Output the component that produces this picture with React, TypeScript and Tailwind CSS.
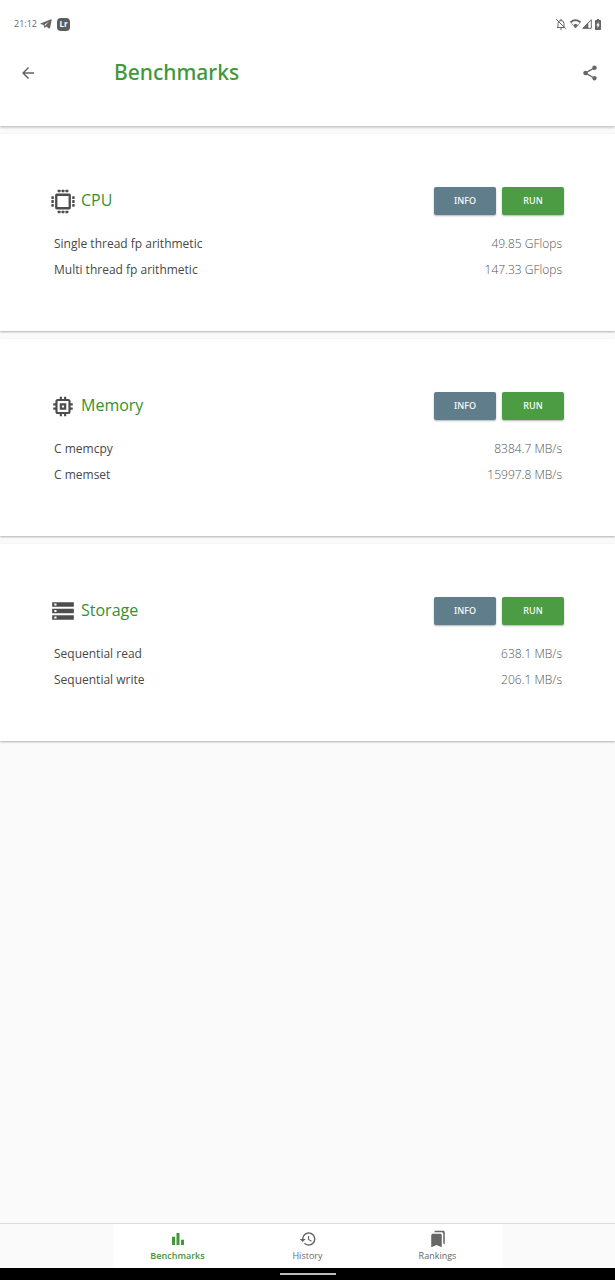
import type { ReactNode } from 'react';
import { MdArrowBack, MdBarChart, MdBookmarks, MdHistory, MdMemory, MdShare, MdStorage } from 'react-icons/md';

type Result = { label: string; value: string };

type Benchmark = { title: string; icon: ReactNode; results: Result[] };

function CpuIcon() {
  return (
    <svg width="27" height="27" viewBox="0 0 27 27" fill="#4d4d4d" aria-hidden="true">
      <rect x="6.5" y="6.5" width="14" height="14" rx="0.5" fill="none" stroke="#4d4d4d" strokeWidth="2.4" />
      {[8, 12, 16].map((p) => (
        <g key={p}>
          <rect x={p} y="1.4" width="3" height="2.6" rx="0.5" />
          <rect x={p} y="23" width="3" height="2.6" rx="0.5" />
          <rect x="1.4" y={p} width="2.6" height="3" rx="0.5" />
          <rect x="23" y={p} width="2.6" height="3" rx="0.5" />
        </g>
      ))}
    </svg>
  );
}

const benchmarks: Benchmark[] = [
  {
    title: 'CPU',
    icon: <CpuIcon />,
    results: [
      { label: 'Single thread fp arithmetic', value: '49.85 GFlops' },
      { label: 'Multi thread fp arithmetic', value: '147.33 GFlops' },
    ],
  },
  {
    title: 'Memory',
    icon: <MdMemory size={29} aria-hidden="true" />,
    results: [
      { label: 'C memcpy', value: '8384.7 MB/s' },
      { label: 'C memset', value: '15997.8 MB/s' },
    ],
  },
  {
    title: 'Storage',
    icon: <MdStorage size={26} aria-hidden="true" />,
    results: [
      { label: 'Sequential read', value: '638.1 MB/s' },
      { label: 'Sequential write', value: '206.1 MB/s' },
    ],
  },
];

const tabs = [
  { label: 'Benchmarks', icon: MdBarChart, active: true },
  { label: 'History', icon: MdHistory, active: false },
  { label: 'Rankings', icon: MdBookmarks, active: false },
];

function StatusBar() {
  return (
    <div className="flex items-center justify-between pt-4 pr-3.5 pl-3.5 text-[#666]">
      <div className="flex items-center">
        <span className="w-[26px] text-[9px] leading-4">21:12</span>
        <svg width="12" height="10" viewBox="0 0 12 10" fill="currentColor" aria-hidden="true">
          <path d="M.5 4.500 11 .3c.5-.2.8.1.7.6L10 9c-.1.6-.5.7-1 .4L6.300 7.400 5 8.700c-.3.3-.6.2-.7-.2L3.600 6 .5 5.100c-.4-.1-.4-.4 0-.6z" />
          <path d="M4.300 6 9 2.500 5.200 6.700z" fill="#fff" />
        </svg>
        <span className="ml-[5px] flex h-[13px] w-[13px] items-center justify-center rounded-sm bg-[#5c5c5c] text-[8px] leading-none font-bold text-white">
          Lr
        </span>
      </div>
      <div className="flex items-center gap-[3px]">
        <svg width="12" height="12" viewBox="0 0 12 12" fill="none" stroke="currentColor" aria-hidden="true">
          <path d="M2 9.500h8M3 9.500V5.500a3 3 0 0 1 6 0v4M6 1v1.500M1.200 1.200l9.600 9.600M5 11h2" />
        </svg>
        <div className="flex items-center gap-px">
          <svg width="11" height="10" viewBox="0 0 11 10" aria-hidden="true">
            <path d="M.5 3.300Q5.500-1 10.500 3.300" fill="none" stroke="currentColor" strokeWidth="1.800" />
            <path d="M.8 3.500 5.500 9 10.200 3.500" fill="none" stroke="currentColor" strokeWidth=".6" />
            <path d="M3.300 6Q5.500 4 8 6L5.500 9.300z" fill="currentColor" />
          </svg>
          <svg width="10" height="10" viewBox="0 0 10 10" aria-hidden="true">
            <path d="M.8 9.300 9.300.8v8.500z" fill="none" stroke="currentColor" />
            <path d="M.8 9.500 6.300 4v5.500z" fill="currentColor" />
          </svg>
        </div>
        <svg width="6" height="11" viewBox="0 0 6 11" fill="currentColor" aria-hidden="true">
          <path fillRule="evenodd" d="M2 0h2v1h1.300q.7 0 .7.7v8.600q0 .7-.7.7H.7Q0 11 0 10.300V1.700Q0 1 .7 1H2zm1.500 3L1.200 6.500h1.300V9l2.300-3.600H3.500z" />
        </svg>
      </div>
    </div>
  );
}

function BenchmarkCard({ title, icon, results }: Benchmark) {
  return (
    <section className="bg-white pt-[53px] pr-[51px] pb-12 pl-[50px] shadow-[0_1px_2px_rgba(0,0,0,0.3)]">
      <div className="flex items-center justify-between">
        <div className="flex items-center text-[#4d4d4d]">
          <span className="flex h-7 w-[26px] items-center justify-center">{icon}</span>
          <h2 className="ml-[5px] pb-0.5 text-base leading-6 font-medium text-[#378f2f]">{title}</h2>
        </div>
        <div className="flex gap-1.5">
          <button
            type="button"
            aria-label={`${title} INFO`}
            className="h-7 w-[62px] rounded-xs bg-[#607d8b] font-['Noto_Sans','Open_Sans',sans-serif] text-[9px] font-medium text-white shadow-[0_1px_2px_rgba(0,0,0,0.3)]"
          >
            INFO
          </button>
          <button
            type="button"
            aria-label={`${title} RUN`}
            className="h-7 w-[62px] rounded-xs bg-[#4c9c44] font-['Noto_Sans','Open_Sans',sans-serif] text-[9px] font-medium text-white shadow-[0_1px_2px_rgba(0,0,0,0.3)]"
          >
            RUN
          </button>
        </div>
      </div>
      <dl className="mt-4 pr-0.5 pl-1 text-xs">
        {results.map((result) => (
          <div key={result.label} className="flex h-[26px] items-center justify-between">
            <dt className="text-[#484848]">{result.label}</dt>
            <dd className="font-light text-[#555]">{result.value}</dd>
          </div>
        ))}
      </dl>
    </section>
  );
}

export default function App() {
  return (
    <div className="flex min-h-screen flex-col bg-[#fafafa] font-['Open_Sans','Noto_Sans',sans-serif]">
      <header className="bg-white pb-[37px] shadow-[0_1px_3px_rgba(0,0,0,0.3)]">
        <StatusBar />
        <div className="mt-[25px] flex h-8 items-center pr-4 pl-[19px] text-[#666]">
          <button type="button" aria-label="Back">
            <MdArrowBack size={18} />
          </button>
          <h1 className="ml-[77px] flex-1 pb-0.5 font-['Noto_Sans','Open_Sans',sans-serif] text-[21px] leading-8 font-medium text-[#419739]">
            Benchmarks
          </h1>
          <button type="button" aria-label="Share">
            <MdShare size={18} />
          </button>
        </div>
      </header>

      <main className="mt-2 flex flex-1 flex-col gap-2">
        {benchmarks.map((benchmark) => (
          <BenchmarkCard key={benchmark.title} {...benchmark} />
        ))}
      </main>

      <footer>
        <nav className="flex justify-center border-t border-[#dcdcdc]">
          {tabs.map(({ label, icon: Icon, active }) => (
            <a
              key={label}
              href={`#${label.toLowerCase()}`}
              aria-current={active ? 'page' : undefined}
              className={`flex h-11 w-[130px] flex-col items-center bg-white pt-1.5 text-[9px] leading-3 ${
                active ? 'font-semibold text-[#419739]' : 'text-[#666]'
              }`}
            >
              <Icon size={18} className="mb-0.5" aria-hidden="true" />
              {label}
            </a>
          ))}
        </nav>
        <div className="flex h-3 items-center justify-center bg-black">
          <span className="h-0.5 w-14 bg-[#bdbdbd]" />
        </div>
      </footer>
    </div>
  );
}
